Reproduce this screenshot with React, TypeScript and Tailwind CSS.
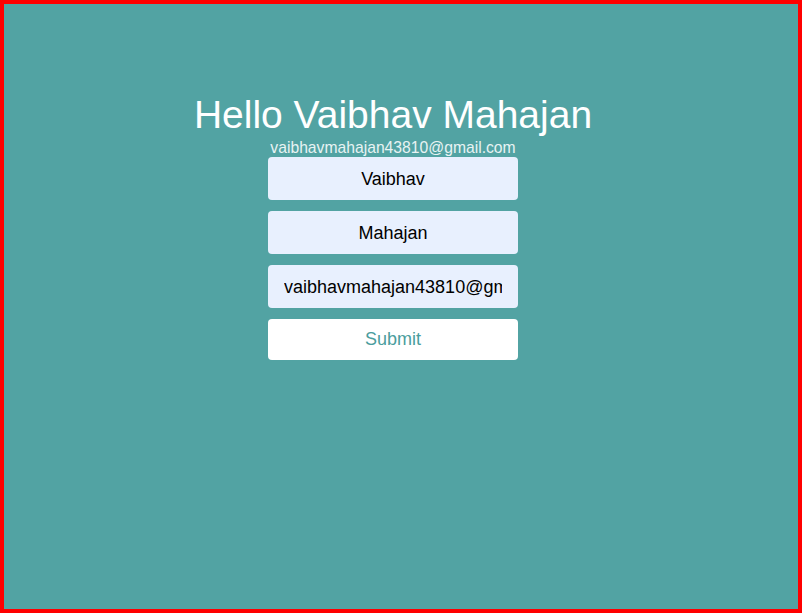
import React from "react";

export default function App() {
  return (
    <div
      className="h-[613px] w-[802px] border-4 border-[#ff0000] bg-[#52a3a3] flex flex-col items-center pt-[88px] pr-[16px]"
      style={{ fontFamily: '"Liberation Sans", Arial, sans-serif' }}
    >
      <h1 className="text-[39px] leading-[45px] text-white font-normal">Hello Vaibhav Mahajan</h1>
      <p className="text-[15.7px] leading-[19px] text-[#e8f3f3] mt-[1px]">vaibhavmahajan43810@gmail.com</p>
      <form className="flex flex-col gap-[11px] w-[250px]" onSubmit={(e) => e.preventDefault()}>
        <input
          readOnly
          defaultValue="Vaibhav"
          className="h-[43px] w-full rounded-[4px] bg-[#e8f0fe] px-[16px] pt-[1px] text-center text-[18px] text-black outline-none"
        />
        <input
          readOnly
          defaultValue="Mahajan"
          className="h-[43px] w-full rounded-[4px] bg-[#e8f0fe] px-[16px] pt-[1px] text-center text-[18px] text-black outline-none"
        />
        <input
          readOnly
          defaultValue="vaibhavmahajan43810@gmail.com"
          className="h-[43px] w-full rounded-[4px] bg-[#e8f0fe] px-[16px] pt-[1px] text-center text-[18px] text-black outline-none"
        />
        <button
          type="submit"
          className="h-[41px] w-full rounded-[4px] bg-white text-[18px] text-[#4a9d9d]"
        >
          Submit
        </button>
      </form>
    </div>
  );
}
